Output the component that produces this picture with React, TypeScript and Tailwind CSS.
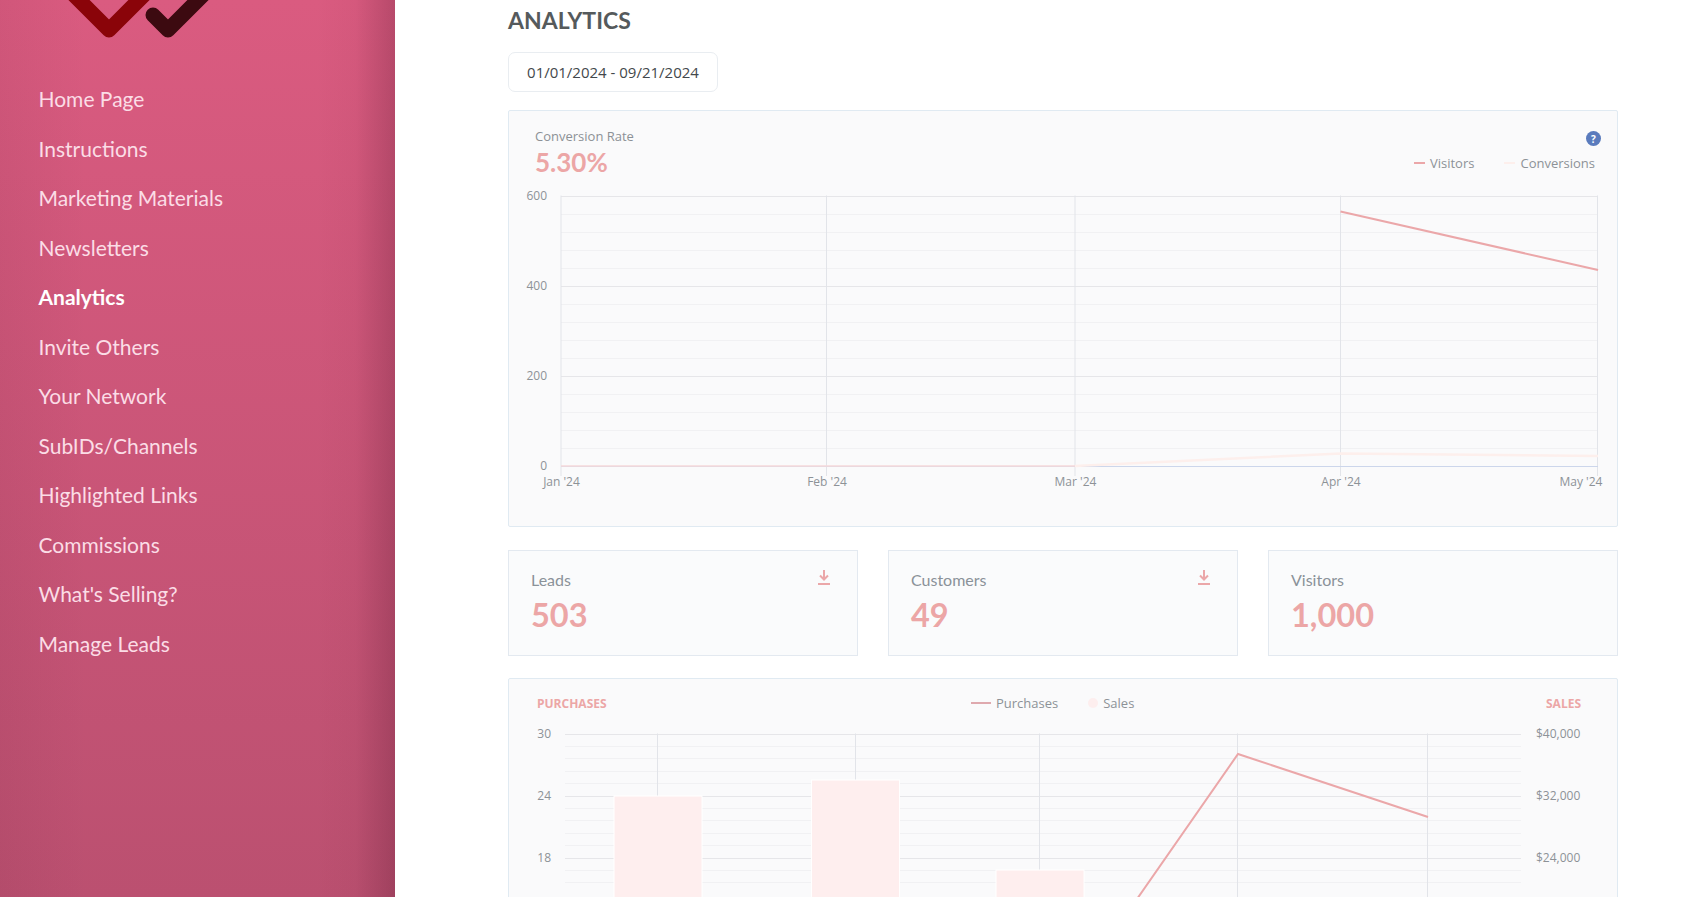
const hLines = (top: number, step: number, count: number) => Array.from({ length: count }, (_, i) => top + (i * step) / 5);
const txt = "font-['Open_Sans',sans-serif] text-[12px] fill-[#8d9297]";

function Chart1() {
  const ys = hLines(195.5, 90.33, 16);
  return (
    <svg className="block" width={1108} height={310} viewBox="509 185 1108 310">
      {ys.map((y, i) => (
        <line key={i} x1={561} x2={1598} y1={Math.round(y) + 0.5} y2={Math.round(y) + 0.5} stroke={i % 5 === 0 ? "#e6e6e9" : "#f1f1f3"} strokeWidth={1} />
      ))}
      {[561, 826.5, 1075, 1340.5, 1597.5].map((x) => (
        <line key={x} x1={x} x2={x} y1={195.5} y2={476} stroke="#e2e4e9" strokeWidth={1} />
      ))}
      <line x1={561} x2={1598} y1={466.5} y2={466.5} stroke="#ccd6eb" strokeWidth={1} />
      <polyline points="1075,466 1341,453.5 1598,456" fill="none" stroke="#fdefec" strokeWidth={2.5} />
      <line x1={561} x2={1075} y1={466} y2={466} stroke="#f6d9da" strokeWidth={1.5} />
      <line x1={1340.5} x2={1598} y1={211.5} y2={270} stroke="#eba7a9" strokeWidth={2} />
      {([["600", 195.5], ["400", 285.5], ["200", 375.5], ["0", 465]] as [string, number][]).map(([t, y]) => (
        <text key={t} x={547} y={y} textAnchor="end" dominantBaseline="central" className={txt}>{t}</text>
      ))}
      {([["Jan '24", 561.5], ["Feb '24", 827], ["Mar '24", 1075.5], ["Apr '24", 1341], ["May '24", 1581]] as [string, number][]).map(([t, x]) => (
        <text key={t} x={x} y={481} textAnchor="middle" dominantBaseline="central" className={txt}>{t}</text>
      ))}
    </svg>
  );
}

function Chart2() {
  const ys = hLines(733.5, 62, 13);
  const bars = [
    [614, 796],
    [811.5, 780],
    [996, 870],
  ];
  return (
    <svg className="block" width={1108} height={180} viewBox="509 720 1108 180">
      {ys.map((y, i) => (
        <line key={i} x1={565} x2={1521} y1={Math.round(y) + 0.5} y2={Math.round(y) + 0.5} stroke={i % 5 === 0 ? "#e6e6e9" : "#f1f1f3"} strokeWidth={1} />
      ))}
      {[657.5, 855.5, 1039.5, 1237.5, 1427.5].map((x) => (
        <line key={x} x1={x} x2={x} y1={733.5} y2={900} stroke="#e2e4e9" strokeWidth={1} />
      ))}
      {bars.map(([x, y]) => (
        <rect key={x} x={x} y={y} width={88} height={200} fill="#feeeee" stroke="#ffffff" strokeWidth={1} />
      ))}
      <polyline points="1039.5,1039 1238,754 1428,817" fill="none" stroke="#eba7a9" strokeWidth={2} />
      {([["30", 733.5], ["24", 795.5], ["18", 857]] as [string, number][]).map(([t, y]) => (
        <text key={t} x={551} y={y} textAnchor="end" dominantBaseline="central" className={txt}>{t}</text>
      ))}
      {([["$40,000", 733.5], ["$32,000", 795.5], ["$24,000", 857]] as [string, number][]).map(([t, y]) => (
        <text key={t} x={1536} y={y} dominantBaseline="central" className={txt}>{t}</text>
      ))}
    </svg>
  );
}

function Dl() {
  return (
    <svg className="block" width="14" height="16" viewBox="0 0 14 16" fill="none" stroke="#eba7a9" strokeWidth="2">
      <path d="M7 1v9" />
      <path d="M3 6.5L7 10.5 11 6.5" />
      <path d="M1 15h12" />
    </svg>
  );
}

const nav = ["Home Page", "Instructions", "Marketing Materials", "Newsletters", "Analytics", "Invite Others", "Your Network", "SubIDs/Channels", "Highlighted Links", "Commissions", "What's Selling?", "Manage Leads"];

function Stat({ label, value, dl }: { label: string; value: string; dl?: boolean }) {
  return (
    <div className="flex h-[106px] w-[350px] justify-between border border-[#e3e9f0] bg-[#fafbfc] pl-[22px] pr-[26px] pt-[18px]">
      <div>
        <div className="font-['Lato',sans-serif] text-[16px] leading-[22px] text-[#8a9299]">{label}</div>
        <div className="mt-[4px] font-['Lato',sans-serif] text-[32.5px] font-bold leading-[40px] text-[#eca6a6]">{value}</div>
      </div>
      {dl && <Dl />}
    </div>
  );
}

function Legend({ mark, label }: { mark: React.ReactNode; label: string }) {
  return (
    <div className="flex items-center gap-[5px] font-['Open_Sans',sans-serif] text-[13px] leading-[18px] text-[#8d9297]">
      {mark}
      <span>{label}</span>
    </div>
  );
}

export default function App() {
  return (
    <div className="flex h-[897px] w-[1694px] overflow-hidden bg-white">
      <aside className="relative flex h-[897px] w-[395px] shrink-0 flex-col bg-[linear-gradient(to_right,rgba(60,10,30,0.06),rgba(60,10,30,0)_22%,rgba(60,10,30,0)_80%,rgba(60,10,30,0.03)_90%,rgba(60,10,30,0.22)),linear-gradient(to_bottom,#da5b80,#bb5070)] pl-[38.5px] pt-[74px]">
        <svg className="absolute left-0 top-0" width={260} height={50}>
          <path d="M66 -13L109 30L152 -13" fill="none" stroke="#8a0409" strokeWidth="15" strokeLinejoin="round" />
          <path d="M153 15L168 30L213 -15" fill="none" stroke="#3c0a10" strokeWidth="15" strokeLinecap="round" strokeLinejoin="round" />
        </svg>
        {nav.map((n) => (
          <div key={n} className={`flex h-[49.5px] items-center font-['Lato',sans-serif] text-[21px] ${n === "Analytics" ? "font-bold text-white" : "text-[#fbdde6]"}`}>
            {n}
          </div>
        ))}
      </aside>
      <main className="flex w-[1223px] shrink-0 flex-col pl-[113px]">
        <h1 className="flex h-[41px] shrink-0 items-center font-['Lato',sans-serif] text-[23px] font-bold leading-none text-[#555a5c]">ANALYTICS</h1>
        <div className="mt-[11px] flex h-[40px] w-[210px] shrink-0 items-center justify-center rounded-[7px] border border-[#e9edf1] font-['Open_Sans',sans-serif] text-[15px] text-[#43484c]">01/01/2024 - 09/21/2024</div>
        <section className="mt-[18px] h-[417px] w-[1110px] shrink-0 rounded-[2px] border border-[#e0eaf2] bg-[#fafafb]">
          <div className="flex h-[74px] justify-between pl-[26px] pr-[16px] pt-[16px]">
            <div>
              <div className="font-['Open_Sans',sans-serif] text-[13px] leading-[18px] text-[#8c9196]">Conversion Rate</div>
              <div className="mt-[1px] font-['Lato',sans-serif] text-[26px] font-bold leading-[32px] text-[#eca6a6]">5.30%</div>
            </div>
            <div className="flex flex-col items-end pt-[4px]">
              <div className="flex h-[15px] w-[15px] shrink-0 items-center justify-center rounded-full bg-[#5a7bbd] font-['Open_Sans',sans-serif] text-[10px] font-bold leading-none text-white">?</div>
              <div className="mr-[6px] mt-[8px] flex gap-[30px]">
                <Legend mark={<i className="h-[2px] w-[11px] bg-[#eba7a9]" />} label="Visitors" />
                <Legend mark={<i className="h-[2px] w-[11px] bg-[#fdefec]" />} label="Conversions" />
              </div>
            </div>
          </div>
          <Chart1 />
        </section>
        <div className="mt-[23px] flex w-[1110px] shrink-0 gap-[30px]">
          <Stat label="Leads" value="503" dl />
          <Stat label="Customers" value="49" dl />
          <Stat label="Visitors" value="1,000" />
        </div>
        <section className="mt-[22px] h-[300px] w-[1110px] shrink-0 rounded-[2px] border border-[#e0eaf2] bg-[#fafafb]">
          <div className="flex h-[41px] items-start pl-[28px] pr-[36px] pt-[15px]">
            <div className="mt-[2px] w-[69px] font-['Open_Sans',sans-serif] text-[12px] font-bold leading-[16px] text-[#eca6a6]">PURCHASES</div>
            <div className="ml-[365px] flex gap-[30px]">
              <Legend mark={<i className="h-[2px] w-[20px] bg-[#dfa9ae]" />} label="Purchases" />
              <Legend mark={<i className="h-[10px] w-[10px] rounded-full bg-[#fdeeee]" />} label="Sales" />
            </div>
            <div className="ml-auto mt-[2px] font-['Open_Sans',sans-serif] text-[12px] font-bold leading-[16px] text-[#eca6a6]">SALES</div>
          </div>
          <Chart2 />
        </section>
      </main>
    </div>
  );
}
